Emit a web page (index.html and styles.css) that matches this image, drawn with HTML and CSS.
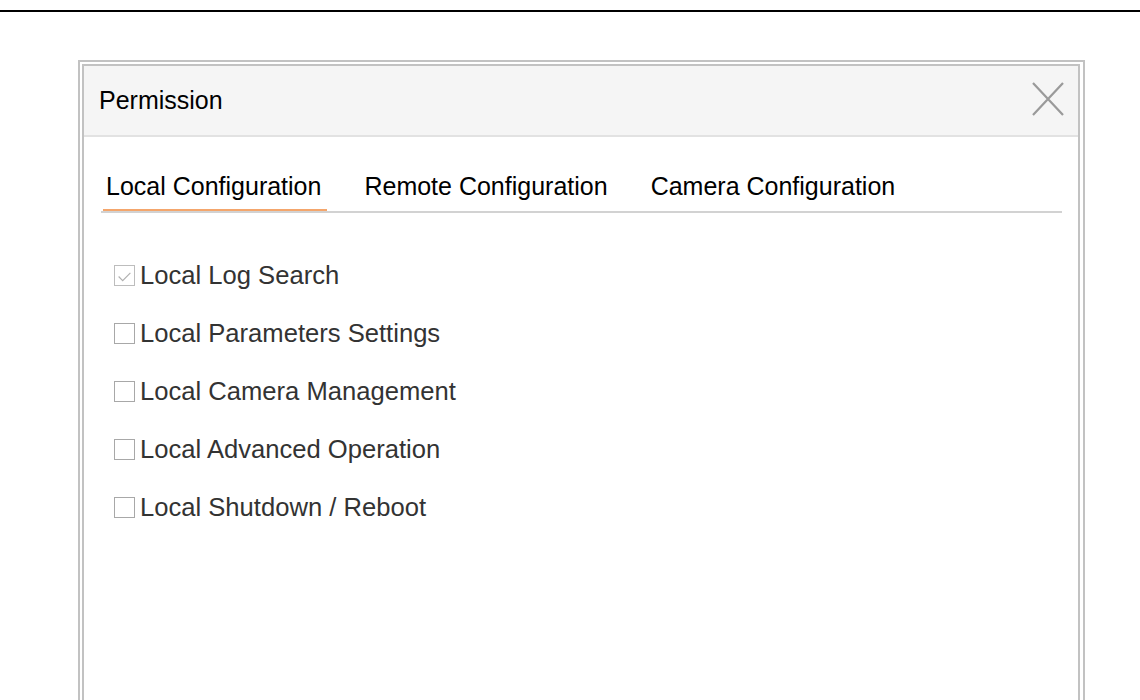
FILE: index.html
```html
<!DOCTYPE html>
<html lang="en">
<head>
<meta charset="utf-8">
<title>Permission</title>
<link rel="stylesheet" href="styles.css">
</head>
<body>
<div class="topline"></div>
<div class="dialog-outer">
  <div class="dialog">
    <div class="header">
      <span class="title">Permission</span>
      <span class="close" aria-label="Close">
        <svg width="32" height="34" viewBox="0 0 32 34"><path d="M1 1 L31 33 M31 1 L1 33" stroke="#9a9a9a" stroke-width="2.2" fill="none"/></svg>
      </span>
    </div>
    <div class="tabs">
      <div class="tab active">Local Configuration</div>
      <div class="tab">Remote Configuration</div>
      <div class="tab">Camera Configuration</div>
    </div>
    <ul class="perm-list">
      <li><span class="cb checked"><svg width="21" height="21" viewBox="0 0 21 21"><path d="M4 10.5 L8.5 15 L17 6.5" stroke="#b0b0b0" stroke-width="1.3" fill="none"/></svg></span>Local Log Search</li>
      <li><span class="cb"></span>Local Parameters Settings</li>
      <li><span class="cb"></span>Local Camera Management</li>
      <li><span class="cb"></span>Local Advanced Operation</li>
      <li><span class="cb"></span>Local Shutdown / Reboot</li>
    </ul>
  </div>
</div>
</body>
</html>
```
FILE: styles.css
```css
html, body {
  margin: 0;
  padding: 0;
  background: #ffffff;
  overflow: hidden;
}
body {
  font-family: "Liberation Sans", Arial, sans-serif;
  width: 1140px;
  height: 700px;
}
.topline {
  margin-top: 10px;
  height: 2px;
  background: #000000;
}
.dialog-outer {
  box-sizing: border-box;
  margin: 48px 0 0 78px;
  width: 1007px;
  height: 640px;
  border: 2px solid #c2c2c2;
  border-bottom: none;
  padding: 2px 3px 0 2px;
}
.dialog {
  box-sizing: border-box;
  height: 100%;
  border: 2px solid #c2c2c2;
  border-bottom: none;
  background: #ffffff;
}
.header {
  box-sizing: border-box;
  height: 71px;
  background: #f5f5f5;
  border-bottom: 2px solid #e2e2e2;
  display: flex;
  align-items: center;
  justify-content: space-between;
  padding: 0 14px 0 15px;
}
.title {
  font-size: 25px;
  color: #000000;
}
.close {
  display: flex;
  margin-top: -4px;
}
.tabs {
  display: flex;
  gap: 34px;
  margin: 34px 16px 0 17px;
  padding-left: 2px;
  border-bottom: 2px solid #d2d2d2;
}
.tab {
  font-size: 25px;
  line-height: 30px;
  color: #000000;
  padding: 0 6px 8px 3px;
  border-bottom: 2px solid transparent;
}
.tab.active {
  border-bottom-color: #f4a66c;
}
.perm-list {
  list-style: none;
  margin: 33px 0 0 0;
  padding: 0 0 0 30px;
}
.perm-list li {
  height: 58px;
  display: flex;
  align-items: center;
  font-size: 25.6px;
  color: #333333;
}
.cb {
  box-sizing: border-box;
  width: 21px;
  height: 21px;
  border: 1px solid #a8a8a8;
  margin-right: 5px;
  display: flex;
  background: #ffffff;
}
.cb.checked {
  border-color: #bdbdbd;
}
```
